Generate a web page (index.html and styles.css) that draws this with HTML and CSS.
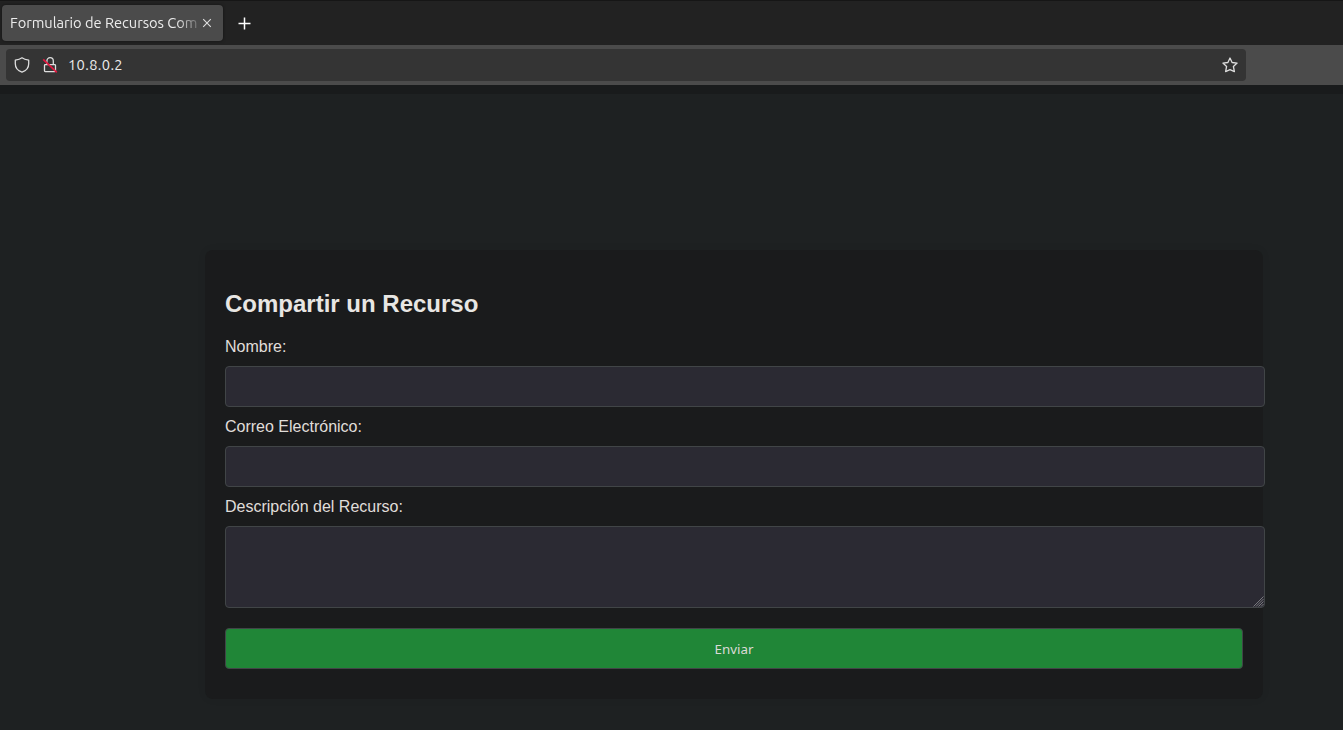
FILE: index.html
```html
<!DOCTYPE html>
<html lang="es">
<head>
<meta charset="utf-8">
<title>Formulario de Recursos Compartidos</title>
<link rel="stylesheet" href="styles.css">
</head>
<body>
<header class="browser">
  <div class="tabs">
    <div class="tab">
      <span class="tab-title">Formulario de Recursos Comp</span>
      <svg class="close" width="10" height="10" viewBox="0 0 10 10"><path d="M1.200 1.200l7.600 7.600M8.800 1.200L1.200 8.800"/></svg>
    </div>
    <svg class="plus" width="14" height="14" viewBox="0 0 14 14"><path d="M7.500 1.500v12M1.500 7.500h12"/></svg>
  </div>
  <div class="toolbar">
    <div class="address">
      <svg class="icon" width="16" height="16" viewBox="0 0 16 16"><path d="M8 .8C6.300 2.100 4 2.800 1.300 3.200v3.600c0 4 2.500 7 6.700 8.400 4.200-1.400 6.700-4.400 6.700-8.400V3.200C12 2.800 9.700 2.100 8 .8z"/></svg>
      <svg class="icon lock" width="16" height="16" viewBox="0 0 16 16"><path d="M3.300 7.600h9.400q.8 0 .8.800v5.400q0 .8-.8.800H3.300q-.8 0-.8-.8V8.400q0-.8.800-.8zM4.900 7.400V3.900a3.200 3.200 0 0 1 6.400 0v3.500"/><path class="slash" d="M1.200 2.300L14.800 15.300"/></svg>
      <span class="url">10.8.0.2</span>
      <svg class="icon star" width="16" height="16" viewBox="0 0 16 16"><path d="M8 1l2.100 4.500 5 .6-3.700 3.400 1 5.100L8 12.700l-4.400 1.900 1-5.100L.9 6.100l5-.6z"/></svg>
    </div>
  </div>
</header>
<div class="divider"></div>
<main class="page">
  <form class="card">
    <h2 class="heading">Compartir un Recurso</h2>
    <label class="label" for="nombre">Nombre:</label>
    <input class="field" id="nombre" type="text">
    <label class="label" for="correo">Correo Electrónico:</label>
    <input class="field" id="correo" type="email">
    <label class="label" for="descripcion">Descripción del Recurso:</label>
    <div class="area">
      <textarea class="field field-tall" id="descripcion"></textarea>
      <svg class="grip" width="11" height="11" viewBox="0 0 11 11"><path d="M.5 10.500l10-10M3 10.500l7.500-7.500M5.500 10.500l5-5M8 10.500l2.500-2.500"/></svg>
    </div>
    <button class="submit" type="button">Enviar</button>
  </form>
</main>
</body>
</html>
```
FILE: styles.css
```css
body {
  margin: 0;
  height: 730px;
  overflow: hidden;
  display: flex;
  flex-direction: column;
  background: #1e2122;
  color: #e0deda;
  font-family: "Liberation Sans", Arial, sans-serif;
}

svg {
  fill: none;
  stroke: #dedede;
  flex: none;
}

.browser {
  font-family: Ubuntu, "Noto Sans", sans-serif;
  font-size: 14.67px;
  line-height: 20px;
  color: #ececec;
}

.tabs {
  box-sizing: border-box;
  height: 45px;
  padding: 4px 2px;
  border-top: 1px solid #161616;
  display: flex;
  align-items: center;
  background: #222;
}

.tab {
  box-sizing: border-box;
  width: 221px;
  height: 36px;
  padding-left: 8px;
  display: flex;
  align-items: center;
  gap: 4px;
  border-radius: 4px;
  background: #4b4b4b;
  box-shadow: 0 0 3px rgba(0, 0, 0, .5);
}

.tab-title {
  width: 188px;
  overflow: hidden;
  white-space: nowrap;
  letter-spacing: -.03px;
  mask-image: linear-gradient(to right, #000 166px, transparent 194px);
}

.close {
  stroke-width: 1.1;
}

.plus {
  margin-left: 14px;
  stroke: #fff;
  stroke-width: 1.5;
}

.toolbar {
  box-sizing: border-box;
  height: 40px;
  padding: 4px 6px;
  background: #4b4b4b;
}

.address {
  box-sizing: border-box;
  width: 1240px;
  height: 32px;
  padding: 0 8px;
  display: flex;
  align-items: center;
  border-radius: 4px;
  background: #343434;
}

.icon {
  stroke-width: 1.3;
  stroke-linejoin: round;
}

.lock {
  margin-left: 12px;
}

.slash {
  stroke: #e2173f;
  stroke-width: 1.7;
}

.url {
  margin-left: 10px;
  letter-spacing: .35px;
}

.star {
  margin-left: auto;
}

.divider {
  height: 9px;
  background: #191b1c;
}

.page {
  flex: 1;
  padding: 156px 80px 0 205px;
}

.card {
  box-sizing: border-box;
  width: 1058px;
  height: 449px;
  padding: 20px;
  border-radius: 8px;
  background: #1a1b1c;
  box-shadow: 0 0 10px rgba(0, 0, 0, .05);
}

.heading {
  margin: 20px 0;
  font-size: 24px;
  line-height: 27px;
  color: #e8e6e3;
}

.card::before {
  content: "";
  display: table;
}

.label {
  display: block;
  height: 19px;
  font-size: 16px;
  line-height: 19px;
}

.field {
  display: block;
  box-sizing: border-box;
  width: 1040px;
  height: 41px;
  margin: 10px 0;
  padding: 10px;
  border: 1px solid #414547;
  border-radius: 4px;
  background: #2b2a33;
  color: #e8e6e3;
  font: 13px "Noto Sans", sans-serif;
}

.area {
  position: relative;
  width: 1040px;
  margin-bottom: 20px;
}

.field-tall {
  height: 82px;
  margin-bottom: 0;
  resize: none;
}

.grip {
  position: absolute;
  right: 1px;
  bottom: 1px;
  stroke: #8c8b90;
  stroke-width: .8;
}

.submit {
  display: block;
  box-sizing: border-box;
  width: 100%;
  height: 41px;
  border: 1px solid #414547;
  border-radius: 4px;
  background: #208637;
  color: #dcdad6;
  font: 13.33px "Noto Sans", sans-serif;
}
```
